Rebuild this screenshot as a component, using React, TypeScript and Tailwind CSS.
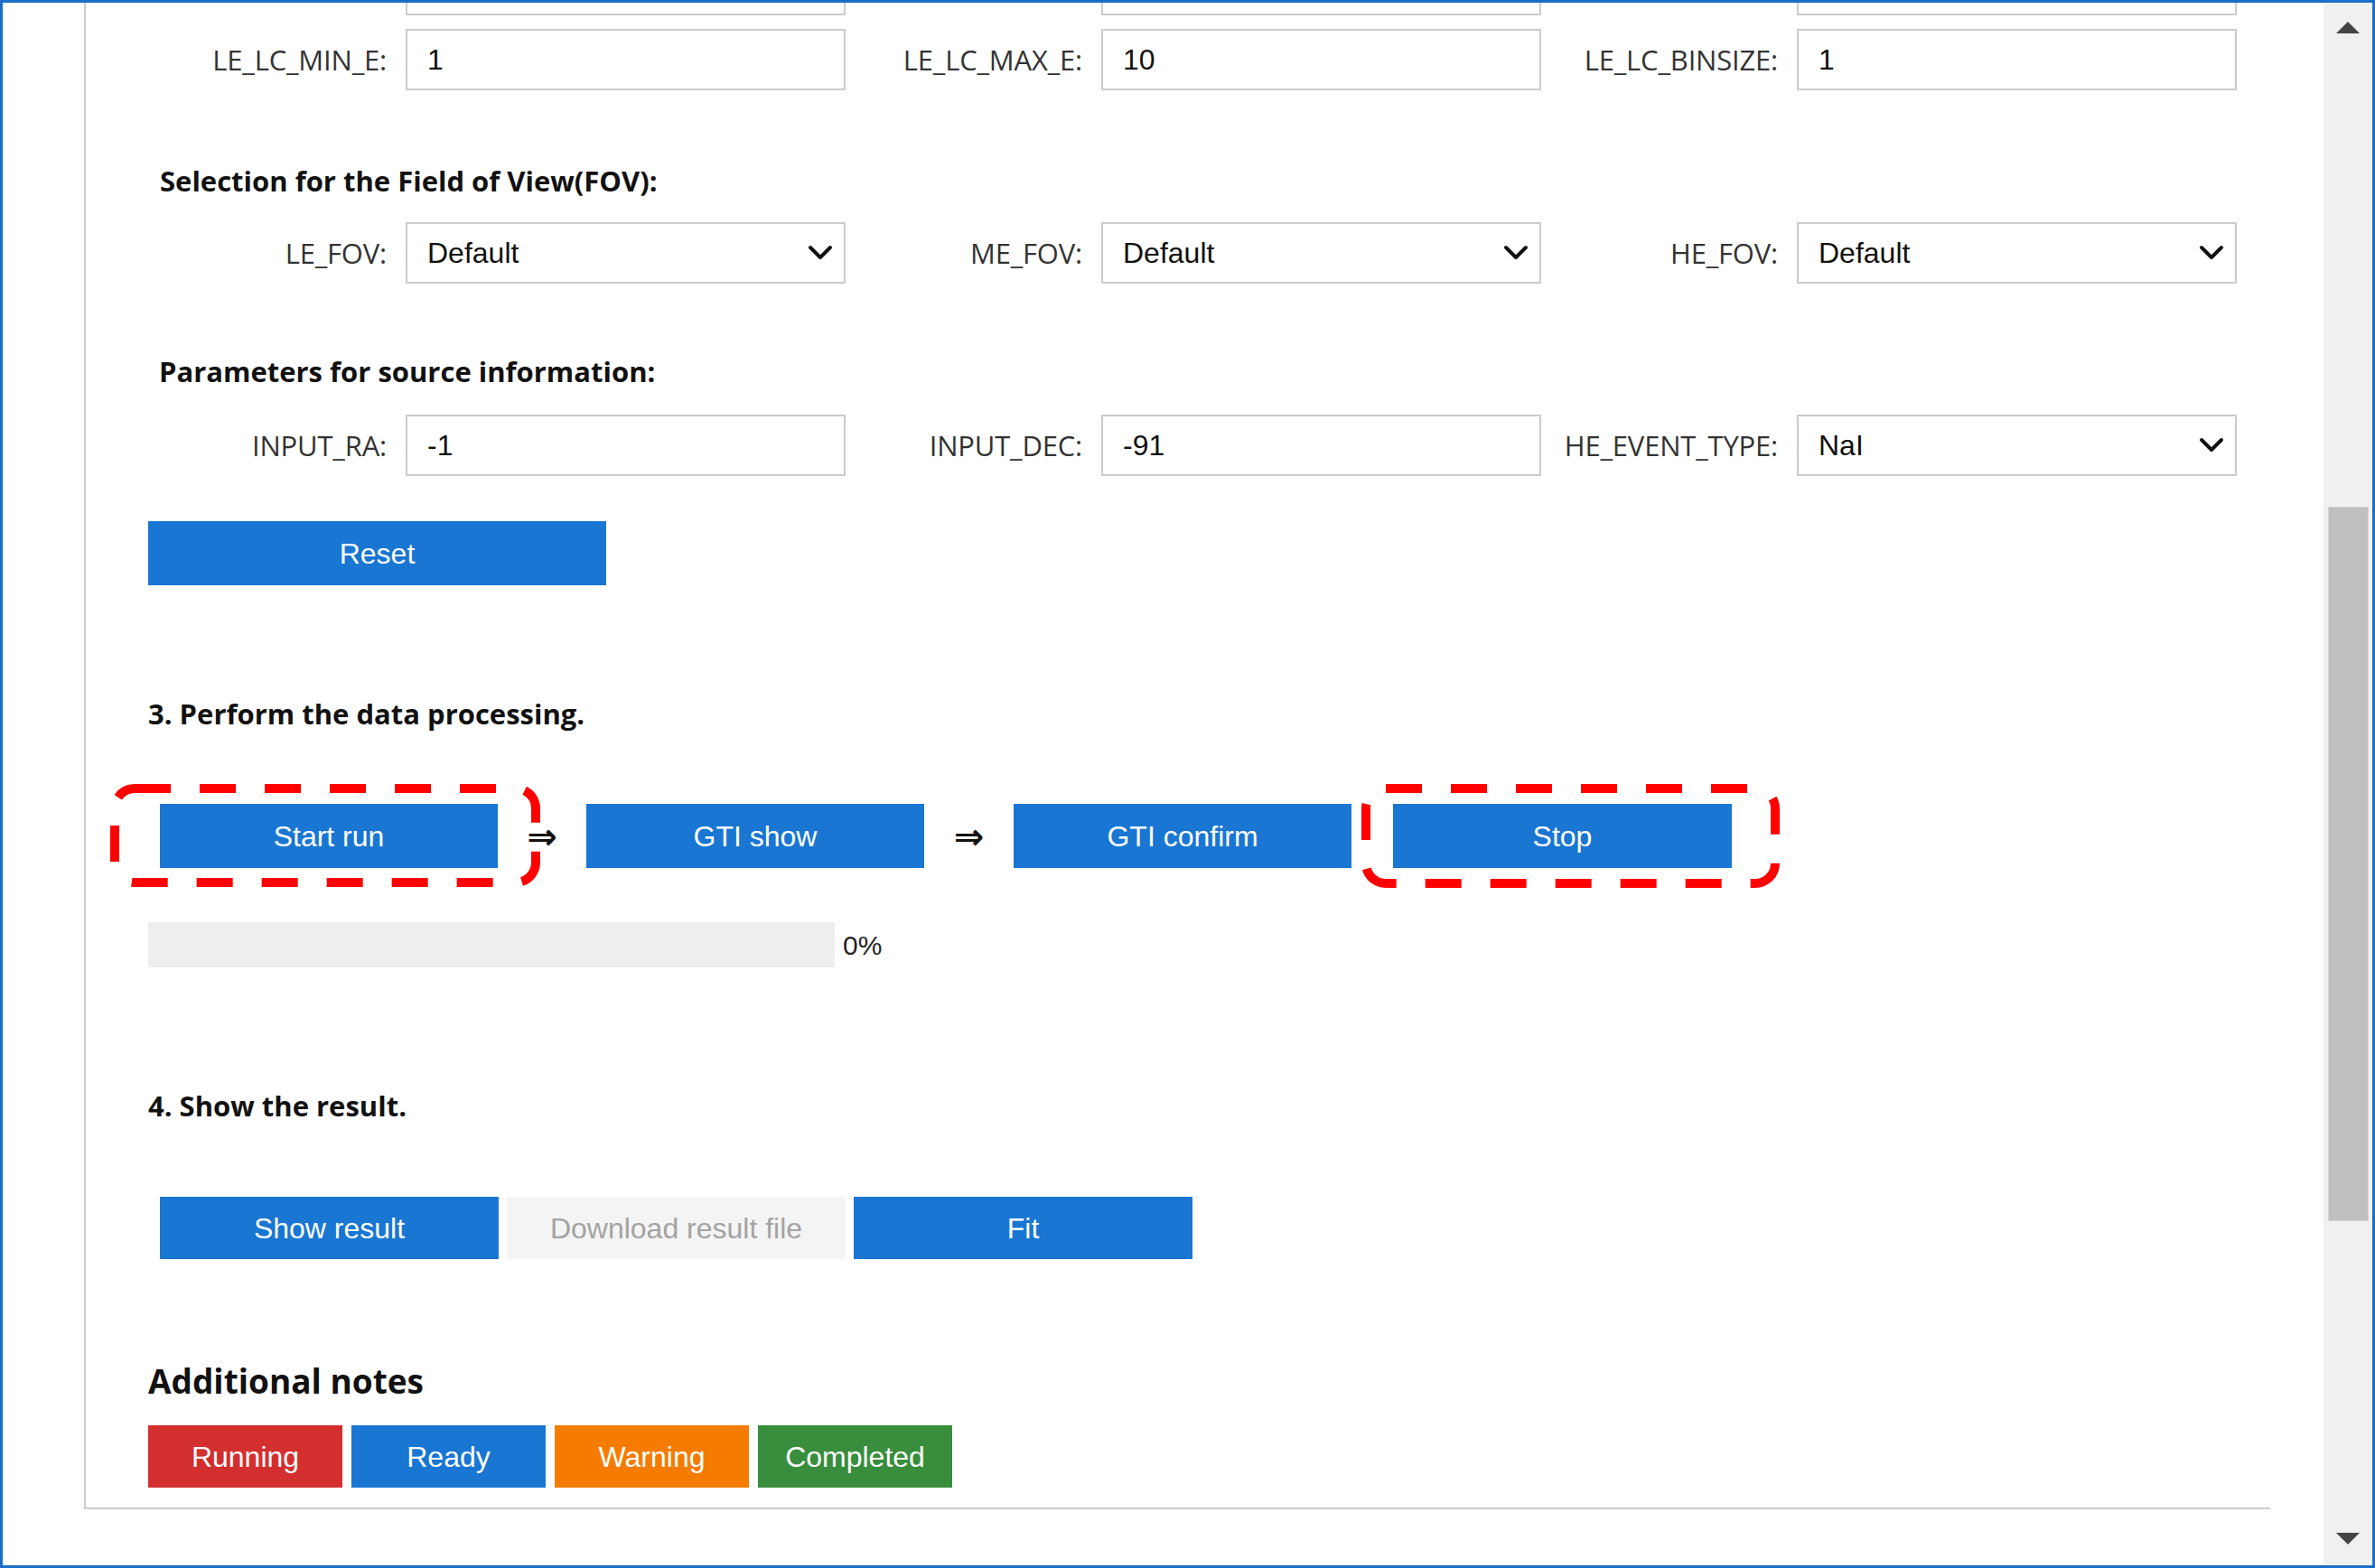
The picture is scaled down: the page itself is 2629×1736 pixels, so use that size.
import React from "react";

const labelFont = { fontFamily: '"Open Sans", "Noto Sans", sans-serif' };
const arial = { fontFamily: '"Liberation Sans", Arial, sans-serif' };

function Chevron() {
  return (
    <svg width="28" height="18" viewBox="0 0 28 18" className="shrink-0">
      <polyline points="3,3 14,14 25,3" fill="none" stroke="#111" strokeWidth="4" strokeLinecap="round" strokeLinejoin="round" />
    </svg>
  );
}

function Field({ label, value, select }: { label: string; value: string; select?: boolean }) {
  return (
    <div className="flex items-center w-[770px]">
      <div className="w-[240px] mr-[21px] text-right text-[31px] text-[#333] whitespace-nowrap tracking-[-0.2px]" style={labelFont}>
        {label}
      </div>
      <div className="w-[487px] h-[68px] border-2 border-[#cbcbcb] bg-white flex items-center justify-between pl-[22px] pr-[12px]">
        <span className="text-[32px] text-[#111]" style={arial}>{value}</span>
        {select ? <Chevron /> : null}
      </div>
    </div>
  );
}

function Row({ children, mt }: { children: React.ReactNode; mt: string }) {
  return <div className={`flex ml-[24px] ${mt}`}>{children}</div>;
}

function Btn({ children, w, className = "" }: { children: React.ReactNode; w: string; className?: string }) {
  return (
    <div
      className={`${w} flex items-center justify-center text-[32px] text-white bg-[#1976d2] ${className}`}
      style={arial}
    >
      {children}
    </div>
  );
}

function DashBox({ w, h, className }: { w: number; h: number; className: string }) {
  return (
    <svg width={w} height={h} viewBox={`0 0 ${w} ${h}`} className={`absolute pointer-events-none ${className}`}>
      <rect x="5" y="5" width={w - 10} height={h - 10} rx="22" ry="22" fill="none" stroke="#ff0000" strokeWidth="10" strokeDasharray="40 32" />
    </svg>
  );
}

function Heading({ children, className = "" }: { children: React.ReactNode; className?: string }) {
  return (
    <div className={`h-[40px] flex items-center text-[31px] font-bold text-[#111] whitespace-nowrap ${className}`} style={labelFont}>
      {children}
    </div>
  );
}

function Arrow({ w }: { w: string }) {
  return (
    <div className={`${w} flex items-center justify-center text-[40px] font-bold text-[#111]`} style={{ fontFamily: '"DejaVu Sans", sans-serif' }}>
      ⇒
    </div>
  );
}

export default function App() {
  return (
    <div className="w-[2629px] h-[1736px] border-[3px] border-[#1a6ec6] bg-white flex overflow-hidden">
      <div className="flex-1 overflow-hidden">
        <div className="mt-[-54px] ml-[90px] w-[2420px] border-l-2 border-b-2 border-[#cccccc] pl-[69px] pb-[22px]">
          <Row mt="mt-0">
            <Field label="" value="" />
            <Field label="" value="" />
            <Field label="" value="" />
          </Row>
          <Row mt="mt-[15px]">
            <Field label="LE_LC_MIN_E:" value="1" />
            <Field label="LE_LC_MAX_E:" value="10" />
            <Field label="LE_LC_BINSIZE:" value="1" />
          </Row>
          <Heading className="mt-[80px] ml-[13px]">Selection for the Field of View(FOV):</Heading>
          <Row mt="mt-[26px]">
            <Field label="LE_FOV:" value="Default" select />
            <Field label="ME_FOV:" value="Default" select />
            <Field label="HE_FOV:" value="Default" select />
          </Row>
          <Heading className="mt-[77px] ml-[12px]">Parameters for source information:</Heading>
          <Row mt="mt-[28px]">
            <Field label="INPUT_RA:" value="-1" />
            <Field label="INPUT_DEC:" value="-91" />
            <Field label="HE_EVENT_TYPE:" value="NaI" select />
          </Row>
          <Btn w="w-[507px]" className="h-[71px] mt-[50px]">Reset</Btn>

          <Heading className="mt-[122px]">3. Perform the data processing.</Heading>
          <div className="relative flex items-center ml-[13px] mt-[80px] h-[71px]">
            <Btn w="w-[374px]" className="h-[71px]">Start run</Btn>
            <Arrow w="w-[98px]" />
            <Btn w="w-[374px]" className="h-[71px]">GTI show</Btn>
            <Arrow w="w-[99px]" />
            <Btn w="w-[374px]" className="h-[71px]">GTI confirm</Btn>
            <div className="w-[46px]" />
            <Btn w="w-[375px]" className="h-[71px]">Stop</Btn>
            <DashBox w={476} h={114} className="left-[-55px] top-[-22px]" />
            <DashBox w={463} h={115} className="left-[1330px] top-[-22px]" />
          </div>
          <div className="flex items-center mt-[60px]">
            <div className="w-[760px] h-[50px] bg-[#eeeeee]" />
            <span className="ml-[9px] text-[30px] text-[#222]" style={arial}>0%</span>
          </div>

          <Heading className="mt-[133px]">4. Show the result.</Heading>
          <div className="flex gap-[9px] ml-[13px] mt-[81px]">
            <Btn w="w-[375px]" className="h-[69px]">Show result</Btn>
            <div className="w-[375px] h-[69px] flex items-center justify-center text-[32px] text-[#a3a3a3] bg-[#f4f4f4]" style={arial}>
              Download result file
            </div>
            <Btn w="w-[375px]" className="h-[69px]">Fit</Btn>
          </div>

          <div className="mt-[115px] h-[40px] flex items-center text-[37px] font-bold text-[#111]" style={labelFont}>
            Additional notes
          </div>
          <div className="flex gap-[10px] mt-[29px]">
            <div className="w-[215px] h-[69px] flex items-center justify-center text-[32px] text-white bg-[#d32f2f]" style={arial}>Running</div>
            <div className="w-[215px] h-[69px] flex items-center justify-center text-[32px] text-white bg-[#1976d2]" style={arial}>Ready</div>
            <div className="w-[215px] h-[69px] flex items-center justify-center text-[32px] text-white bg-[#f57c00]" style={arial}>Warning</div>
            <div className="w-[215px] h-[69px] flex items-center justify-center text-[32px] text-white bg-[#388e3c]" style={arial}>Completed</div>
          </div>
        </div>
      </div>
      <div className="w-[54px] bg-[#f0f0f0] flex flex-col items-center">
        <div className="mt-[21px] w-0 h-0 border-l-[13px] border-r-[13px] border-b-[13px] border-l-transparent border-r-transparent border-b-[#444]" />
        <div className="mt-[524px] w-[45px] h-[791px] bg-[#bfbfbf] border border-[#d4d4d4]" />
        <div className="flex-1" />
        <div className="mb-[23px] w-0 h-0 border-l-[13px] border-r-[13px] border-t-[13px] border-l-transparent border-r-transparent border-t-[#444]" />
      </div>
    </div>
  );
}
